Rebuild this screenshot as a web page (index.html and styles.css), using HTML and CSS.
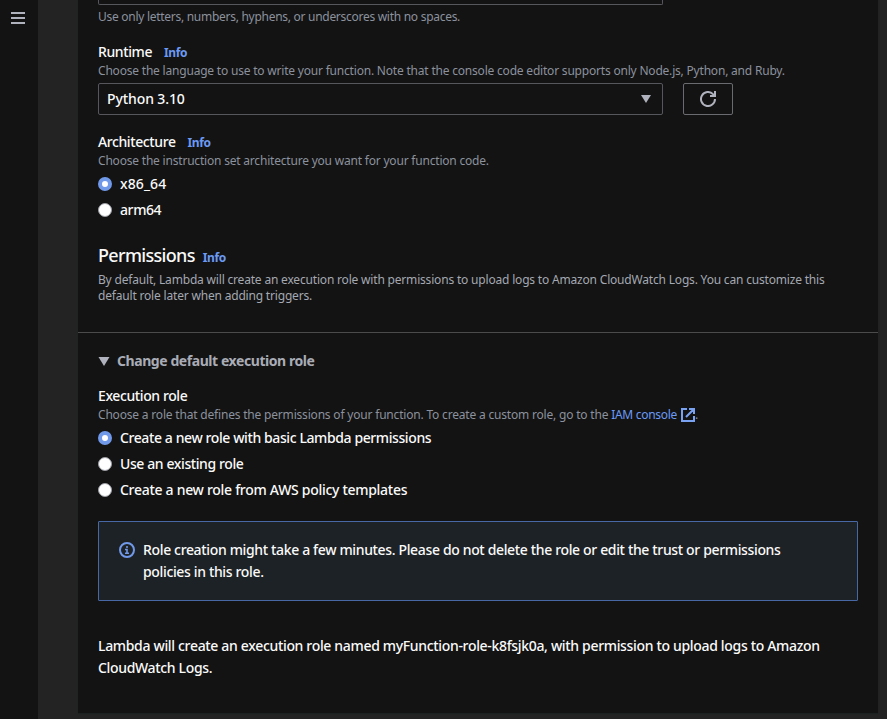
FILE: index.html
```html
<!DOCTYPE html>
<html lang="en">
<head>
<meta charset="utf-8">
<title>Create function</title>
<link rel="stylesheet" href="styles.css">
</head>
<body>
<div class="app">
  <nav class="rail">
    <button class="menu" aria-label="Open navigation"><svg width="14" height="12" viewBox="0 0 14 12"><path d="M0 1h14M0 6h14M0 11h14" stroke="#b0b3bd" stroke-width="2"/></svg></button>
  </nav>
  <main class="panel">
    <div class="name-input"></div>
    <p class="help name-help">Use only letters, numbers, hyphens, or underscores with no spaces.</p>

    <section class="field runtime">
      <div class="label"><span>Runtime</span><a class="info">Info</a></div>
      <p class="help">Choose the language to use to write your function. Note that the console code editor supports only Node.js, Python, and Ruby.</p>
      <div class="select-row">
        <div class="select"><span>Python 3.10</span><svg width="10" height="8" viewBox="0 0 10 8"><path d="M0 0h10L5 8z" fill="#b0b3bd"/></svg></div>
        <button class="refresh" aria-label="Refresh"><svg width="16" height="16" viewBox="0 0 16 16" fill="none" stroke="#b0b3bd" stroke-width="2"><path d="M15 8a7 7 0 1 1-2-4.900L15 5"/><path d="M15 0v5h-5"/></svg></button>
      </div>
    </section>

    <section class="field architecture">
      <div class="label"><span>Architecture</span><a class="info">Info</a></div>
      <p class="help">Choose the instruction set architecture you want for your function code.</p>
      <div class="radios">
        <label class="radio wide"><i class="dot on"></i>x86_64</label>
        <label class="radio"><i class="dot"></i>arm64</label>
      </div>
    </section>

    <section class="permissions">
      <h2><span>Permissions</span><a class="info">Info</a></h2>
      <p>By default, Lambda will create an execution role with permissions to upload logs to Amazon CloudWatch Logs. You can customize this<br>default role later when adding triggers.</p>
    </section>

    <section class="role">
      <h3><svg width="12" height="9" viewBox="0 0 12 9"><path d="M.5 0h11L6 9z" fill="#b0b3bd"/></svg>Change default execution role</h3>
      <div class="label"><span>Execution role</span></div>
      <p class="help role-help">Choose a role that defines the permissions of your function. To create a custom role, go to the <a class="link">IAM console<svg width="14" height="14" viewBox="0 0 14 14" fill="none" stroke="#7aa2f2" stroke-width="2"><path d="M6 1H1v12h12V8M8 1h5v5M13 1 5 9"/></svg></a>.</p>
      <div class="radios">
        <label class="radio"><i class="dot on"></i>Create a new role with basic Lambda permissions</label>
        <label class="radio"><i class="dot"></i>Use an existing role</label>
        <label class="radio templates"><i class="dot"></i>Create a new role from AWS policy templates</label>
      </div>
      <div class="alert">
        <svg width="16" height="16" viewBox="0 0 16 16" fill="none" stroke="#7199ea" stroke-width="2"><circle cx="8" cy="8" r="7"/><path d="M7 5h2M6 7.500h2V11M6 11.300h4" stroke-width="1.600"/></svg>
        <p>Role creation might take a few minutes. Please do not delete the role or edit the trust or permissions<br>policies in this role.</p>
      </div>
      <p class="note">Lambda will create an execution role named myFunction-role-k8fsjk0a, with permission to upload logs to Amazon<br>CloudWatch Logs.</p>
    </section>
  </main>
</div>
</body>
</html>
```
FILE: styles.css
```css
* { box-sizing: border-box; }
body {
  margin: 0;
  background: #232323;
  color: #fafafa;
  font: 500 14px/22px "Noto Sans", "Open Sans", sans-serif;
  letter-spacing: -0.35px;
}
p, h2, h3 { margin: 0; }
button { padding: 0; background: none; border: 0; }
svg { display: block; flex: none; }
.app { display: flex; height: 719px; overflow: hidden; }
.rail { width: 38px; flex: none; background: #131313; padding: 12px 0 0 11px; }
.menu { display: block; }
.panel {
  width: 800px;
  height: 713px;
  margin-left: 40px;
  padding: 0 20px;
  background: #131313;
  box-shadow: 0 1px 1px #1b2020;
}
.name-input { width: 565px; height: 5px; border: 1px solid #55575c; border-top: 0; border-radius: 0 0 2px 2px; }
.help { color: #8b919d; font-size: 12px; line-height: 16px; font-weight: 400; letter-spacing: -0.2px; white-space: nowrap; }
.name-help { padding-top: 4px; letter-spacing: -0.28px; }
.role-help { letter-spacing: -0.19px; }
.runtime { margin-top: 16px; }
.label { display: flex; gap: 12px; letter-spacing: -0.4px; }
.info { color: #6b9af5; font-size: 12px; font-weight: 700; letter-spacing: -0.4px; }
.label .info { padding-top: 1px; height: 22px; }
.select-row { display: flex; gap: 20px; margin-top: 4px; }
.select {
  display: flex;
  align-items: center;
  justify-content: space-between;
  width: 565px;
  height: 32px;
  padding: 0 11px 0 8px;
  border: 1px solid #55575c;
  border-radius: 2px;
  letter-spacing: -0.1px;
}
.refresh { display: flex; align-items: center; justify-content: center; width: 50px; height: 32px; border: 1px solid #696b70; border-radius: 2px; }
.architecture { margin-top: 16px; }
.radios { display: flex; flex-direction: column; gap: 4px; margin-top: 4px; letter-spacing: -0.4px; }
.radio { display: flex; align-items: center; gap: 8px; }
.radio.wide { letter-spacing: 0.1px; }
.radio.templates { letter-spacing: -0.29px; }
.dot { width: 14px; height: 14px; border-radius: 50%; background: #fff; border: 1px solid #9a9da3; }
.dot.on { border: 4px solid #7199ea; }
.permissions {
  height: 89px;
  margin: 23px -20px 0;
  padding: 0 20px;
  border-bottom: 1px solid #4b4b4b;
}
.permissions h2 { display: flex; gap: 8px; align-items: baseline; height: 22px; font-size: 18px; font-weight: 500; line-height: 22px; letter-spacing: -0.68px; }
.permissions p { margin-top: 6px; color: #a4a8b1; font-size: 12px; font-weight: 400; line-height: 16px; letter-spacing: -0.185px; white-space: nowrap; }
.role { padding-top: 17px; }
.role h3 { display: flex; align-items: center; gap: 7px; color: #a9acb6; font-size: 14px; font-weight: 700; letter-spacing: -0.43px; margin-bottom: 13px; }
.link { color: #6b9af5; letter-spacing: -0.3px; }
.link svg { display: inline-block; vertical-align: -3px; margin: 0 0 0 4px; }
.alert {
  display: flex;
  gap: 8px;
  height: 80px;
  margin-top: 20px;
  padding: 17px 20px;
  background: #1d2226;
  border: 1px solid #4768a5;
  border-radius: 1px;
}
.alert svg { margin-top: 3px; }
.alert p, .note { white-space: nowrap; }
.note { margin-top: 34px; letter-spacing: -0.33px; }
```
